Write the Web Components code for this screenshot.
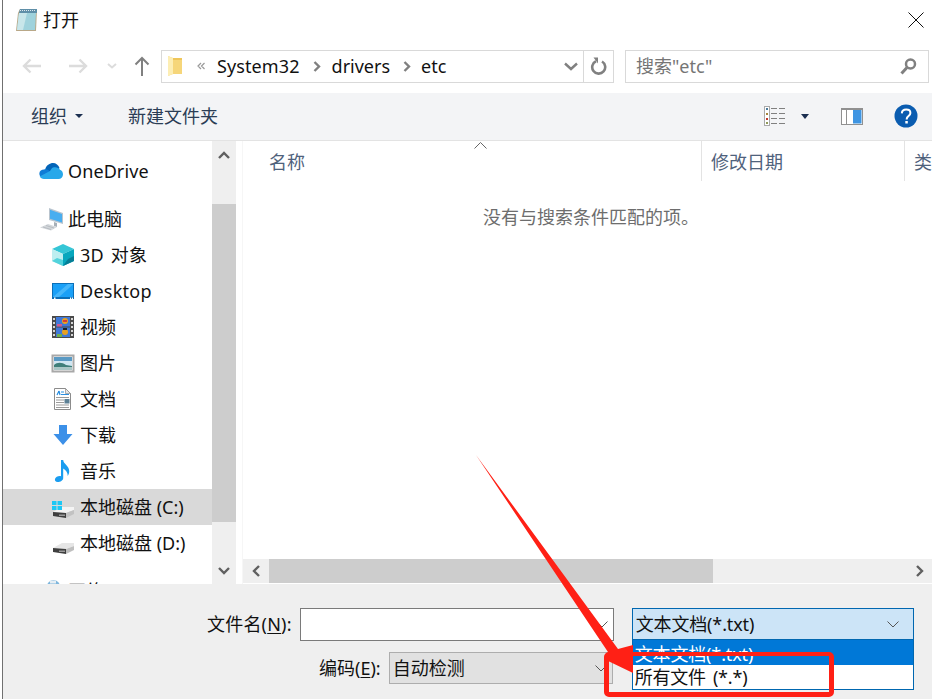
<!DOCTYPE html>
<html lang="zh">
<head>
<meta charset="utf-8">
<title>打开</title>
<style>
  html, body { margin: 0; width: 932px; height: 699px; overflow: hidden; background: #fff; }
  svg { display: block; }
</style>
</head>
<body>
<open-dialog>
  <title-bar>打开</title-bar>
  <nav-bar></nav-bar>
  <tool-bar></tool-bar>
  <div slot="main" style="display:flex;height:443px">
    <nav-pane>
      <nav-item style="margin-top:12px;letter-spacing:.1px"><svg slot="icon" width="24" height="24" viewBox="0 0 24 24"><path fill="#0364b8" d="M6 11C7 6 11 4 14 4c3 0 5.500 2 6.500 5L16 15 7 13z"/><path fill="#0f7cd6" d="M5 10.500c2-.5 4 .2 5.500 1.500L16 14l-8 5-7-2C-1 13 2 10.500 5 10.500z"/><path fill="#28a8ea" d="M14 8.500c3-.7 6 .2 7 2.200 2 .8 3 2.600 3 4.800 0 2.500-2 4.500-4.500 4.500H5c-2 0-3.500-1-4.300-2.500L11 12c.8-1.500 1.700-3 3-3.500z"/></svg>OneDrive</nav-item>
      <nav-item style="margin-top:12px"><svg slot="icon" width="24" height="24" viewBox="0 0 24 24"><path fill="#b9c4ce" d="M10 1l14 5v11l-14-4z"/><path fill="#48aef0" d="M11 2.800l12 4.200v8.500l-12-3.700z"/><path fill="#a7b0b8" d="M15 15l3 1v4l-3-1z"/><path fill="#d3d7db" d="M1 20.500l8-3.500 9 3-6 3.500z"/><path stroke="#aab0b6" stroke-width=".7" fill="none" d="M4 20l8 2.500M7 18.500l8 2.500"/></svg>此电脑</nav-item>
      <nav-item level="2" style="word-spacing:2px;letter-spacing:.2px"><svg slot="icon" width="24" height="24" viewBox="0 0 24 24"><path fill="#35c6d6" d="M12 1l11 5-11 5L1 6z"/><path fill="#bdeef0" d="M1 6l11 5v12L1 18z"/><path fill="#07a7bd" d="M23 6l-11 5v12l11-5z"/><path fill="#067e96" d="M23 13l-6 3-5 7 11-5z"/><path fill="#53d3dc" d="M1 18l5-3 6 2v6z"/></svg>3D 对象</nav-item>
      <nav-item level="2" style="letter-spacing:.25px"><svg slot="icon" width="24" height="24" viewBox="0 0 24 24"><rect x="1" y="4" width="22" height="16" fill="#0b6fb8"/><rect x="2" y="5" width="20" height="13" fill="#1aa0f7"/><path fill="#45b6fa" d="M2 18L17 5h5v.5L8 18z"/><path fill="#fff" d="M3 18.500h1.500V20H3zM19 18.500h1.200V20H19zM21 18.500h1V20h-1z"/></svg>Desktop</nav-item>
      <nav-item level="2"><svg slot="icon" width="24" height="24" viewBox="0 0 24 24"><rect x="1" y="1" width="22" height="22" fill="#4a4a4a"/><path fill="#d6d6d6" d="M2 3h2v2H2zM2 7h2v2H2zM2 11h2v2H2zM2 15h2v2H2zM2 19h2v2H2zM20 3h2v2h-2zM20 7h2v2h-2zM20 11h2v2h-2zM20 15h2v2h-2zM20 19h2v2h-2z"/><rect x="5" y="2" width="14" height="9.500" fill="#3f78d8"/><rect x="5" y="12.500" width="14" height="9.500" fill="#3f78d8"/><circle cx="14" cy="6" r="3" fill="#e8a020"/><path fill="#d83a3a" d="M12 5h4v2h-4z"/><path fill="#d05a90" d="M6 9h5v2.500H6z"/><circle cx="14" cy="17" r="3" fill="#e8a020"/><path fill="#222" d="M12 13h4v2h-4z"/><path fill="#6fb04a" d="M6 19h5v3H6z"/></svg>视频</nav-item>
      <nav-item level="2"><svg slot="icon" width="24" height="24" viewBox="0 0 24 24"><rect x="1.500" y="4.500" width="21" height="16" fill="#fff" stroke="#a8a8a8" stroke-width="2"/><rect x="3" y="6" width="18" height="13" fill="#cfe6f2"/><path fill="#5a9ac4" d="M3 6h18v4H3z"/><path fill="#3f7f7a" d="M3 14c3-3 8-3 12 0l6 1v1H3z"/><path fill="#a9c6c6" d="M3 16h18v3H3z"/></svg>图片</nav-item>
      <nav-item level="2"><svg slot="icon" width="24" height="24" viewBox="0 0 24 24"><path fill="#fff" stroke="#8c8c8c" d="M3.500 1.500h11l5 5v16h-16z"/><path fill="#e6e6e6" stroke="#8c8c8c" stroke-width=".7" d="M14.500 1.500v5h5z"/><path stroke="#2b8fe0" stroke-width="1.200" d="M6 8l2-4M9 8l-1-4M10 5h3M10 7.500h8"/><path stroke="#9a9a9a" d="M5 10.500h13M5 13h8M5 15.500h8M5 18h13M5 20.500h13"/><rect x="13.500" y="12" width="5" height="4.500" fill="#5b7f94"/></svg>文档</nav-item>
      <nav-item level="2"><svg slot="icon" width="24" height="24" viewBox="0 0 24 24"><path fill="#3c90e8" d="M8 2h8v9h5.500L12 22 2.500 11H8z"/></svg>下载</nav-item>
      <nav-item level="2"><svg slot="icon" width="24" height="24" viewBox="0 0 24 24"><path fill="#1a9df0" d="M10 1h2.200c.3 4 5.800 5.500 6 11 0 2-.5 3.500-1.500 5 .2-3-1.500-6-4.500-7.500V19c0 2.500-3 4-5.500 4C4.500 23 3.500 21.500 4 20c.7-2 3.500-3.500 6-2.800z"/></svg>音乐</nav-item>
      <nav-item level="2" selected><svg slot="icon" width="24" height="24" viewBox="0 0 24 24"><path fill="#f4f4f4" d="M2 17l9-5h12v3l-8 3z"/><path fill="#c2c2c2" d="M15 18l8-3v4l-8 4z"/><path fill="#3f3f3f" d="M2 17l13 1v5L2 21z"/><path fill="#9a9a9a" d="M8 19.500h6V21H8z"/><path fill="#1cc8f5" d="M1 6h4.500v4H1zM6.500 6H11v4H6.500zM1 11h4.500v4H1zM6.500 11H11v4H6.500z"/></svg>本地磁盘 (C:)</nav-item>
      <nav-item level="2"><svg slot="icon" width="24" height="24" viewBox="0 0 24 24"><path fill="#e6e6e6" d="M2 17l9-5h12v3l-8 3z"/><path fill="#bfbfbf" d="M15 18l8-3v4l-8 4z"/><path fill="#3f3f3f" d="M2 17l13 1v5L2 21z"/><path fill="#9a9a9a" d="M8 19.500h6V21H8z"/></svg>本地磁盘 (D:)</nav-item>
      <nav-item style="margin-top:12px"><svg slot="icon" width="24" height="24" viewBox="0 0 24 24"><circle cx="14.500" cy="7.500" r="6.500" fill="#7fb6dc"/><path fill="#e6eef4" d="M11 1.500h6v3h-6z"/></svg>网络</nav-item>
    </nav-pane>
    <file-list></file-list>
  </div>
  <file-footer slot="footer"></file-footer>
</open-dialog>
<red-callout></red-callout>

<script>
// latin first so that names look like the dialog, CJK after it
const UI_FONT = `"Noto Sans", "Noto Sans CJK SC", sans-serif`;

class OpenDialog extends HTMLElement {
  constructor() {
    super();
    this.attachShadow({ mode: 'open' }).innerHTML = `
      <style>
        :host {
          display: flex;
          flex-direction: column;
          box-sizing: border-box;
          width: 930px;
          height: 699px;
          margin-left: 2px;
          border-left: 1px solid #707070;
          font: 18px/24px ${UI_FONT};
          color: #111;
          background: #fff;
        }
      </style>
      <slot></slot>
      <slot name="main"></slot>
      <slot name="footer"></slot>`;
  }
}

class TitleBar extends HTMLElement {
  constructor() {
    super();
    this.attachShadow({ mode: 'open' }).innerHTML = `
      <style>
        :host { display: flex; align-items: center; height: 40px; padding: 0 8px 1px 12px; box-sizing: border-box; }
        .name { margin-left: 5px; flex: 1; }
      </style>
      <svg width="23" height="25" viewBox="0 0 23 25">
        <path fill="#b9a888" d="M3 6l2-4h17l-1 22H1z"/>
        <path fill="#9fd2dc" d="M4 6h17l-1 17H2z"/>
        <path fill="#c8e6ea" d="M4 6h8L8 23H2z"/>
        <path fill="#5f8fa8" d="M5 2h17v4H4z"/>
        <path stroke="#fff" stroke-width=".8" stroke-dasharray="1 1" d="M5 3.500h16"/>
      </svg>
      <span class="name"><slot></slot></span>
      <svg width="16" height="16" viewBox="0 0 16 16"><path d="M.5.500l15 15M15.500.500l-15 15" stroke="#111" fill="none"/></svg>`;
  }
}

class NavBar extends HTMLElement {
  constructor() {
    super();
    this.attachShadow({ mode: 'open' }).innerHTML = `
      <style>
        :host { display: flex; align-items: center; height: 53px; padding: 0 0 1px 19px; box-sizing: border-box; }
        .btn { display: flex; }
        .box {
          display: flex; align-items: center; box-sizing: border-box; height: 33px;
          border: 1px solid #d9d9d9; background: #fff;
        }
        .addr { width: 453px; margin-left: 11px; padding-left: 6px; }
        .crumb { white-space: nowrap; }
        .addr svg.sep { margin: 0 11px 0 13px; }
        .grow { flex: 1; }
        .refresh { display: flex; align-items: center; height: 100%; border-left: 1px solid #d9d9d9; padding: 0 6px 0 6px; }
        .search { width: 304px; margin-left: 11px; padding: 0 11px 0 10px; color: #757575; }
      </style>
      <span class="btn"><svg width="20" height="16" viewBox="0 0 20 16"><path d="M19 8H2M8.500 1.500L2 8l6.500 6.500" fill="none" stroke="#dcdcdc" stroke-width="2.400"/></svg></span>
      <span class="btn" style="margin-left:26px"><svg width="20" height="16" viewBox="0 0 20 16"><path d="M1 8h17M11.500 1.500L18 8l-6.500 6.500" fill="none" stroke="#dcdcdc" stroke-width="2.400"/></svg></span>
      <span class="btn" style="margin-left:19px"><svg width="10" height="6" viewBox="0 0 10 6"><path d="M1 1l4 3.500L9 1" fill="none" stroke="#dcdcdc" stroke-width="2"/></svg></span>
      <span class="btn" style="margin-left:17px"><svg width="16" height="20" viewBox="0 0 16 20"><path d="M8 20V2M1.500 8.500L8 2l6.500 6.500" fill="none" stroke="#808080" stroke-width="2"/></svg></span>
      <div class="box addr">
        <svg width="15" height="22" viewBox="0 0 15 22"><path fill="#f6d67a" d="M0 1l5 2h9v16H5l-5 2z"/><path fill="#fdeeb4" d="M0 1l5 2v16l-5 2z"/><path fill="#efc65a" d="M5 3h9v2H5z"/></svg>
        <svg width="8" height="8" viewBox="0 0 8 8" style="margin:0 12px 0 14px"><path d="M4 1L1 4l3 3M7.500 1l-3 3 3 3" fill="none" stroke="#999" stroke-width="1.200"/></svg>
        <span class="crumb" style="letter-spacing:.1px">System32</span>
        <svg class="sep" width="8" height="11" viewBox="0 0 8 11"><path d="M1.500 1L6 5.500 1.500 10" fill="none" stroke="#808080" stroke-width="2.400"/></svg>
        <span class="crumb">drivers</span>
        <svg class="sep" width="8" height="11" viewBox="0 0 8 11" style="margin-right:10px"><path d="M1.500 1L6 5.500 1.500 10" fill="none" stroke="#808080" stroke-width="2.400"/></svg>
        <span class="crumb">etc</span>
        <span class="grow"></span>
        <svg width="14" height="9" viewBox="0 0 14 9" style="margin-right:5px"><path d="M1 1.500l6 5.500 6-5.500" fill="none" stroke="#808080" stroke-width="2.400"/></svg>
        <span class="refresh"><svg width="17" height="18" viewBox="0 0 17 18"><path d="M6 4.200A6.500 6.500 0 1 0 12 4.500" fill="none" stroke="#808080" stroke-width="2.600"/><path fill="#808080" d="M3.500 .5h4.500v6z"/></svg></span>
      </div>
      <div class="box search">
        <span>搜索"etc"</span>
        <span class="grow"></span>
        <svg width="17" height="17" viewBox="0 0 17 17"><circle cx="10.500" cy="6" r="4.500" fill="none" stroke="#808080" stroke-width="2.500"/><path d="M7 9.500L1.500 15.500" stroke="#808080" stroke-width="3"/></svg>
      </div>`;
  }
}

class ToolBar extends HTMLElement {
  constructor() {
    super();
    this.attachShadow({ mode: 'open' }).innerHTML = `
      <style>
        :host {
          display: flex; align-items: center; height: 48px; box-sizing: border-box;
          padding: 0 0 1px 28px; background: #f3f4f6; border-bottom: 1px solid #e3e3e3; color: #2b3d55;
        }
        .caret { width: 0; height: 0; border: 4px solid transparent; border-top: 4px solid #1b2f50; border-bottom: 0; }
        .grow { flex: 1; }
      </style>
      <span>组织</span>
      <span class="caret" style="margin-left:8px"></span>
      <span style="margin-left:45px">新建文件夹</span>
      <span class="grow"></span>
      <svg width="21" height="20" viewBox="0 0 21 20">
        <rect x=".5" y=".5" width="5" height="19" fill="#fff" stroke="#a9a9a9"/>
        <path fill="#4a7a9a" d="M2 2h2v2H2z"/><path fill="#a8853c" d="M2 7h2v2H2z"/><path fill="#c0352b" d="M2 12h2v2H2z"/><path fill="#8f9a5a" d="M2 16h2v2H2z"/>
        <path stroke="#808080" d="M7 2.500h6M15 2.500h6M7 7.500h6M15 7.500h6M7 12.500h6M15 12.500h6M7 17.500h6M15 17.500h6"/>
      </svg>
      <span class="caret" style="margin-left:16px;border-width:5px 4px 0;border-top-color:#1b2f50"></span>
      <svg width="22" height="17" viewBox="0 0 22 17" style="margin-left:32px">
        <rect x=".5" y=".5" width="21" height="16" fill="#fff" stroke="#909090"/>
        <path stroke="#909090" d="M5.500 1v15"/>
        <rect x="12" y="2" width="8.500" height="13.500" fill="#3f95e2"/>
        <path stroke="#909090" stroke-width="2" d="M1 1h21"/>
      </svg>
      <svg width="24" height="24" viewBox="0 0 24 24" style="margin:0 14px 0 31px">
        <circle cx="12" cy="12" r="11.500" fill="#0a5cb0"/>
        <path d="M7.800 9.300C8 6.700 10 5.600 12.200 5.600c2.400 0 4.200 1.300 4.200 3.400 0 3-3.700 3-3.700 6v.6" fill="none" stroke="#fff" stroke-width="2"/>
        <rect x="11.300" y="17" width="2.500" height="2.500" fill="#fff"/>
      </svg>`;
  }
}

class NavPane extends HTMLElement {
  constructor() {
    super();
    this.attachShadow({ mode: 'open' }).innerHTML = `
      <style>
        :host { display: flex; width: 233px; flex: none; height: 443px; overflow: hidden; }
        .list { flex: none; width: 209px; height: 443px; overflow: hidden; }
        .bar { flex: none; width: 24px; height: 443px; background: #efefef; display: flex; flex-direction: column; }
        .btn { height: 63px; display: flex; justify-content: center; padding-top: 10px; box-sizing: border-box; }
        .thumb { height: 318px; background: #cdcdcd; }
        .down { height: 62px; padding-top: 45px; }
      </style>
      <div class="list"><slot></slot></div>
      <div class="bar">
        <div class="btn"><svg width="12" height="8" viewBox="0 0 12 8"><path d="M1 7l5-5 5 5" fill="none" stroke="#606060" stroke-width="2.400"/></svg></div>
        <div class="thumb"></div>
        <div class="btn down"><svg width="12" height="8" viewBox="0 0 12 8"><path d="M1 1l5 5 5-5" fill="none" stroke="#606060" stroke-width="2.400"/></svg></div>
      </div>`;
  }
}

class NavItem extends HTMLElement {
  constructor() {
    super();
    this.attachShadow({ mode: 'open' }).innerHTML = `
      <style>
        :host { display: flex; align-items: center; height: 36px; padding-left: 36px; white-space: nowrap; }
        :host([level="2"]) { padding-left: 48px; }
        :host([selected]) { background: #d9d9d9; }
        .icon { flex: none; width: 24px; height: 24px; margin-right: 5px; }
      </style>
      <span class="icon"><slot name="icon"></slot></span>
      <slot></slot>`;
  }
}

class FileList extends HTMLElement {
  constructor() {
    super();
    this.attachShadow({ mode: 'open' }).innerHTML = `
      <style>
        :host { position: relative; display: flex; flex-direction: column; flex: 1; min-width: 0; margin-left: 6px; height: 443px; border-left: 1px solid #f6f6f6; }
        .head { display: flex; height: 40px; color: #4f627c; }
        .col { box-sizing: border-box; padding: 9px 0 0 9px; border-right: 1px solid #e3e3e3; white-space: nowrap; overflow: hidden; }
        .sort { position: absolute; left: 231px; top: 1px; }
        .empty { flex: 1; padding: 24px 0 0 240px; color: #6d6d6d; }
        .hbar { display: flex; flex: none; height: 24px; margin-bottom: 1px; background: #efefef; }
        .hbtn { width: 26px; display: flex; align-items: center; justify-content: center; }
        .hthumb { width: 444px; background: #cdcdcd; }
        .grow { flex: 1; }
        .hend { width: 16px; display: flex; align-items: center; }
      </style>
      <svg class="sort" width="13" height="7" viewBox="0 0 13 7"><path d="M.5 6.500l6-6 6 6" fill="none" stroke="#666"/></svg>
      <div class="head">
        <div class="col" style="width:459px;padding-left:26px">名称</div>
        <div class="col" style="width:203px">修改日期</div>
        <div class="col" style="border:0;flex:1">类</div>
      </div>
      <div class="empty">没有与搜索条件匹配的项。</div>
      <div class="hbar">
        <div class="hbtn"><svg width="8" height="12" viewBox="0 0 8 12"><path d="M7 1L2 6l5 5" fill="none" stroke="#606060" stroke-width="2.400"/></svg></div>
        <div class="hthumb"></div>
        <div class="grow"></div>
        <div class="hend"><svg width="8" height="12" viewBox="0 0 8 12"><path d="M1 1l5 5-5 5" fill="none" stroke="#606060" stroke-width="2.400"/></svg></div>
      </div>`;
  }
}

class FileFooter extends HTMLElement {
  constructor() {
    super();
    const chev = `<svg width="12" height="7" viewBox="0 0 12 7"><path d="M.5 .5L6 6l5.500-5.500" fill="none" stroke="#555"/></svg>`;
    this.attachShadow({ mode: 'open' }).innerHTML = `
      <style>
        :host { display: block; height: 115px; box-sizing: border-box; padding-top: 24px; background: #efefef; }
        .row { display: flex; align-items: flex-start; }
        .r1 { padding-left: 204px; }
        .r2 { padding-left: 316px; margin-top: 11px; }
        label { line-height: 33px; white-space: nowrap; margin-right: 8px; }
        .r1 label { margin-right: 8px; letter-spacing: .2px; }
        u { text-underline-offset: 2px; }
        .field {
          display: flex; align-items: center; justify-content: space-between; box-sizing: border-box;
          padding: 0 5px 0 3px; height: 33px;
        }
        .name { width: 314px; background: #fff; border: 1px solid #7a7a7a; }
        .enc { width: 224px; height: 32px; background: #e1e1e1; border: 1px solid #adadad; }
        .combo { position: relative; margin-left: 18px; width: 282px; }
        .type { height: 32px; background: #cce4f7; border: 1px solid #0067b0; padding-right: 14px; padding-left: 3px; letter-spacing: -.15px; }
        .menu { position: absolute; left: 0; right: 0; top: 31px; box-sizing: border-box; border: 1px solid #0067b0; background: #fff; height: 51px; }
        .opt { height: 24.500px; line-height: 24px; padding-left: 2px; white-space: pre; letter-spacing: -.15px; }
        .opt.on { background: #0078d7; color: #fff; line-height: 29px; }
        .all { word-spacing: -1px; letter-spacing: -.2px; }
      </style>
      <div class="row r1">
        <label>文件名(<u>N</u>):</label>
        <div class="field name"><span></span>${chev}</div>
        <div class="combo">
          <div class="field type"><span>文本文档(*.txt)</span>${chev}</div>
          <div class="menu">
            <div class="opt on">文本文档(*.txt)</div>
            <div class="opt all">所有文件  (*.*)</div>
          </div>
        </div>
      </div>
      <div class="row r2">
        <label>编码(<u>E</u>):</label>
        <div class="field enc"><span>自动检测</span>${chev}</div>
      </div>`;
  }
}

// the red marks somebody drew on top of the screenshot
class RedCallout extends HTMLElement {
  constructor() {
    super();
    this.attachShadow({ mode: 'open' }).innerHTML = `
      <style>
        :host { position: absolute; left: 0; top: 0; width: 932px; height: 699px; pointer-events: none; }
        .box { position: absolute; left: 604px; top: 652px; width: 230px; height: 45px; box-sizing: border-box; border: 5px solid #ff2015; border-top-width: 4px; border-radius: 5px; }
      </style>
      <svg width="932" height="699" style="position:absolute;left:0;top:0"><polygon fill="#ff2015" points="476,455 618,649 633,645 633,673 606,660 610,655"/></svg>
      <div class="box"></div>`;
  }
}

customElements.define('open-dialog', OpenDialog);
customElements.define('title-bar', TitleBar);
customElements.define('nav-bar', NavBar);
customElements.define('tool-bar', ToolBar);
customElements.define('nav-pane', NavPane);
customElements.define('nav-item', NavItem);
customElements.define('file-list', FileList);
customElements.define('file-footer', FileFooter);
customElements.define('red-callout', RedCallout);
</script>
</body>
</html>
